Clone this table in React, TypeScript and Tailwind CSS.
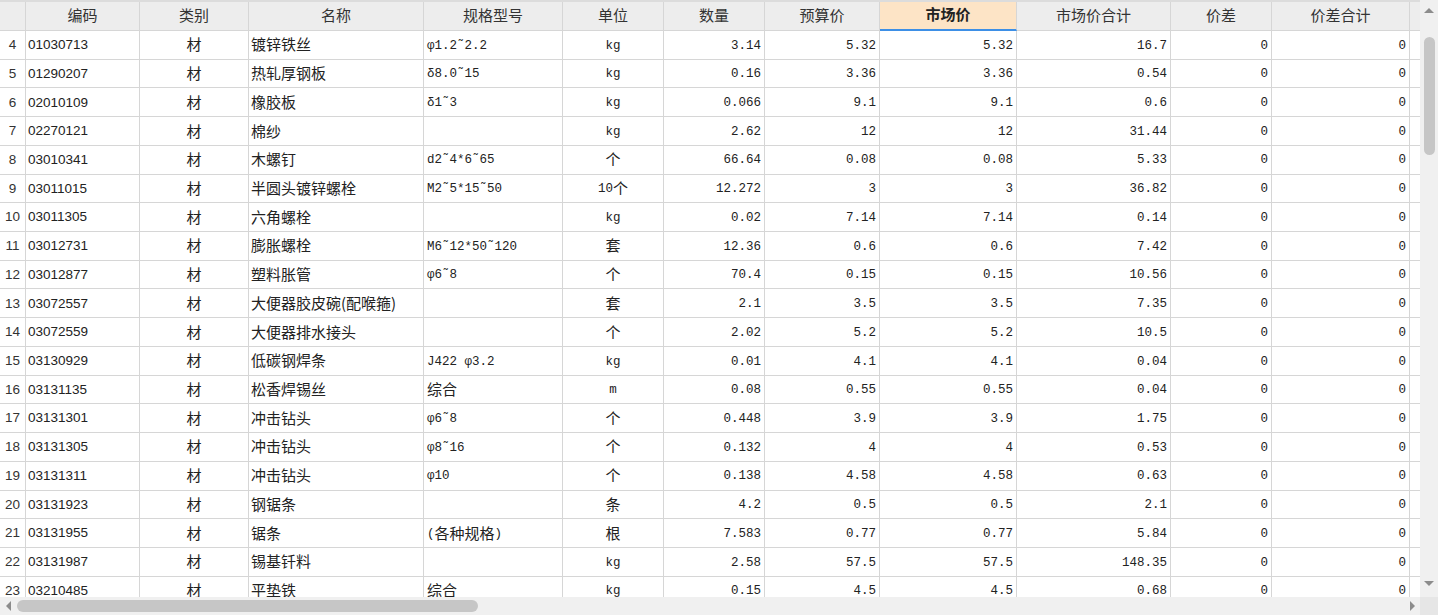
type Row = [number, string, string, string, string, string, string, string, string, string];

const rows: Row[] = [
  [4, "01030713", "镀锌铁丝", "φ1.2˜2.2", "kg", "3.14", "5.32", "5.32", "16.7", ""],
  [5, "01290207", "热轧厚钢板", "δ8.0˜15", "kg", "0.16", "3.36", "3.36", "0.54", ""],
  [6, "02010109", "橡胶板", "δ1˜3", "kg", "0.066", "9.1", "9.1", "0.6", ""],
  [7, "02270121", "棉纱", "", "kg", "2.62", "12", "12", "31.44", ""],
  [8, "03010341", "木螺钉", "d2˜4*6˜65", "个", "66.64", "0.08", "0.08", "5.33", ""],
  [9, "03011015", "半圆头镀锌螺栓", "M2˜5*15˜50", "10个", "12.272", "3", "3", "36.82", ""],
  [10, "03011305", "六角螺栓", "", "kg", "0.02", "7.14", "7.14", "0.14", ""],
  [11, "03012731", "膨胀螺栓", "M6˜12*50˜120", "套", "12.36", "0.6", "0.6", "7.42", ""],
  [12, "03012877", "塑料胀管", "φ6˜8", "个", "70.4", "0.15", "0.15", "10.56", ""],
  [13, "03072557", "大便器胶皮碗(配喉箍)", "", "套", "2.1", "3.5", "3.5", "7.35", ""],
  [14, "03072559", "大便器排水接头", "", "个", "2.02", "5.2", "5.2", "10.5", ""],
  [15, "03130929", "低碳钢焊条", "J422 φ3.2", "kg", "0.01", "4.1", "4.1", "0.04", ""],
  [16, "03131135", "松香焊锡丝", "综合", "m", "0.08", "0.55", "0.55", "0.04", ""],
  [17, "03131301", "冲击钻头", "φ6˜8", "个", "0.448", "3.9", "3.9", "1.75", ""],
  [18, "03131305", "冲击钻头", "φ8˜16", "个", "0.132", "4", "4", "0.53", ""],
  [19, "03131311", "冲击钻头", "φ10", "个", "0.138", "4.58", "4.58", "0.63", ""],
  [20, "03131923", "钢锯条", "", "条", "4.2", "0.5", "0.5", "2.1", ""],
  [21, "03131955", "锯条", "(各种规格)", "根", "7.583", "0.77", "0.77", "5.84", ""],
  [22, "03131987", "锡基钎料", "", "kg", "2.58", "57.5", "57.5", "148.35", ""],
  [23, "03210485", "平垫铁", "综合", "kg", "0.15", "4.5", "4.5", "0.68", ""],
];

const cols = "grid grid-cols-[26px_114px_109px_175px_139px_101px_101px_115px_137px_154px_101px_138px_10px]";
const cjk = "font-['Noto_Sans_CJK_SC',sans-serif]";
const mono = "font-['Liberation_Mono','Noto_Sans_CJK_SC',monospace]";
const sans = "font-['Liberation_Sans',Arial,sans-serif]";
const cell = "flex items-center overflow-hidden whitespace-nowrap border-r border-b border-[#d6d6d6] text-[#222] leading-none";

const headers = ["", "编码", "类别", "名称", "规格型号", "单位", "数量", "预算价", "市场价", "市场价合计", "价差", "价差合计"];

// mono text with chinese runs shown at full size
function Mixed({ text }: { text: string }) {
  const parts = text.split(/([\u4e00-\u9fff]+)/).filter(Boolean);
  return (
    <>
      {parts.map((p, i) =>
        /[\u4e00-\u9fff]/.test(p) ? (
          <span key={i} className={`text-[15px] ${cjk} -translate-y-[1.5px]`}>
            {p}
          </span>
        ) : (
          <span key={i} className={`text-[12.5px] ${mono} translate-y-[0.5px]`}>
            {p}
          </span>
        )
      )}
    </>
  );
}

function Header() {
  return (
    <div className={`${cols} h-[31px] bg-[#ededed] border-t-2 border-[#dcdcdc]`}>
      {headers.map((h, i) =>
        i === 8 ? (
          <div
            key={i}
            className={`flex items-center justify-center border-r border-[#d6d6d6] border-b-2 border-b-[#3d8fe6] bg-[#fde4c6] text-[15px] font-bold text-[#222] ${cjk}`}
          >
            <span className="-translate-y-[1px]">{h}</span>
          </div>
        ) : (
          <div
            key={i}
            className={`flex items-center justify-center border-r border-b border-[#d6d6d6] text-[15px] text-[#333] ${cjk}`}
          >
            <span className="-translate-y-[1px]">{h}</span>
          </div>
        )
      )}
      <div className="border-b border-[#d6d6d6]" />
    </div>
  );
}

function Num({ v }: { v: string }) {
  return (
    <div className={`${cell} justify-end pr-[3px] text-[12.5px] ${mono}`}>
      <span className="translate-y-[0.5px]">{v}</span>
    </div>
  );
}

function DataRow({ r }: { r: Row }) {
  const [no, code, name, spec, unit, qty, budget, market, total] = r;
  return (
    <div className={`${cols} h-[28.72px] bg-white`}>
      <div className={`${cell} justify-center text-[13.5px] text-[#333] ${sans}`}>{no}</div>
      <div className={`${cell} pl-[2px] text-[13.5px] ${sans}`}>{code}</div>
      <div className={`${cell} justify-center text-[15px] ${cjk}`}>
        <span className="-translate-y-[1.5px]">材</span>
      </div>
      <div className={`${cell} pl-[2px] text-[15px] ${cjk}`}>
        <span className="-translate-y-[1.5px]">{name}</span>
      </div>
      <div className={`${cell} pl-[3px]`}>
        <Mixed text={spec} />
      </div>
      <div className={`${cell} justify-center`}>
        <Mixed text={unit} />
      </div>
      <Num v={qty} />
      <Num v={budget} />
      <Num v={market} />
      <Num v={total} />
      <Num v="0" />
      <Num v="0" />
      <div className="border-b border-[#d6d6d6]" />
    </div>
  );
}

function Arrow({ dir }: { dir: "up" | "down" | "left" | "right" }) {
  const pts = {
    up: "0,6 5,1 10,6",
    down: "0,1 5,6 10,1",
    left: "6,0 1,5 6,10",
    right: "1,0 6,5 1,10",
  }[dir];
  const vertical = dir === "up" || dir === "down";
  return (
    <svg width={vertical ? 10 : 7} height={vertical ? 7 : 10} viewBox={vertical ? "0 0 10 7" : "0 0 7 10"}>
      <polygon points={pts} fill="#8c8c8c" />
    </svg>
  );
}

export default function App() {
  return (
    <div className="w-[1438px] h-[615px] flex flex-col bg-white overflow-hidden">
      <div className="flex h-[597px]">
        <div className="w-[1420px] h-[597px] overflow-hidden">
          <Header />
          {rows.map((r) => (
            <DataRow key={r[0]} r={r} />
          ))}
        </div>
        <div className="w-[18px] h-[597px] bg-[#f0f0f0] flex flex-col items-center">
          <div className="h-[20px] flex items-center justify-center">
            <Arrow dir="up" />
          </div>
          <div className="w-[11px] h-[118px] mt-[17px] rounded-full bg-[#c6c6c6]" />
          <div className="flex-1" />
          <div className="h-[20px] mb-[4px] flex items-center justify-center">
            <Arrow dir="down" />
          </div>
        </div>
      </div>
      <div className="flex h-[18px]">
        <div className="w-[1420px] bg-[#f0f0f0] flex items-center">
          <div className="w-[16px] flex justify-center">
            <Arrow dir="left" />
          </div>
          <div className="w-[461px] h-[12px] ml-[1px] rounded-full bg-[#c6c6c6]" />
          <div className="flex-1" />
          <div className="w-[16px] flex justify-center">
            <Arrow dir="right" />
          </div>
        </div>
        <div className="w-[18px] bg-[#e6e6e6]" />
      </div>
    </div>
  );
}
